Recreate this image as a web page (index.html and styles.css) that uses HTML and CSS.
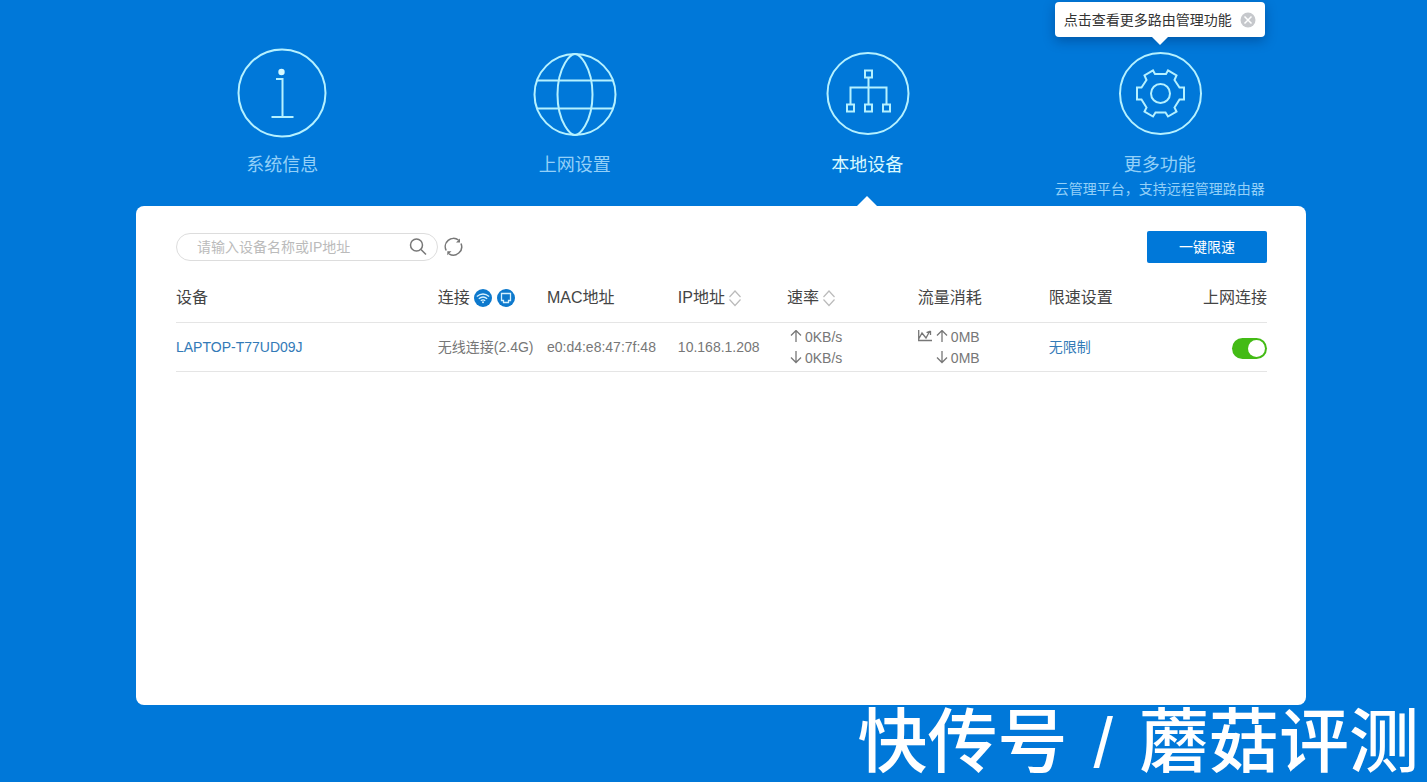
FILE: index.html
```html
<!DOCTYPE html>
<html lang="zh-CN">
<head>
<meta charset="utf-8">
<title>本地设备</title>
<link rel="stylesheet" href="styles.css">
</head>
<body>
<div class="page">
  <nav class="nav">
    <a class="nav-item" href="#">
      <svg class="nav-icon" viewBox="0 0 90 90"><circle cx="45" cy="45" r="43.5"/><circle class="fill" cx="44.500" cy="24" r="3.2"/><path d="M39 31H45.500V69M34.500 69H56.500"/></svg>
      <span class="nav-label">系统信息</span>
    </a>
    <a class="nav-item" href="#">
      <svg class="nav-icon" viewBox="0 0 90 90"><circle cx="45" cy="46.500" r="40.500"/><path d="M45 6C42 6 38 10 35 15C25 32 25 61 35 78C38 83 42 87 45 87C48 87 52 83 55 78C65 61 65 32 55 15C52 10 48 6 45 6M7 32.500H83M7 60.500H83"/></svg>
      <span class="nav-label">上网设置</span>
    </a>
    <a class="nav-item active" href="#">
      <svg class="nav-icon" viewBox="0 0 90 90"><circle cx="46" cy="45.500" r="40.500"/><path d="M43 22.500h7v7h-7zM25 56.500h7v7h-7zM43 56.500h7v7h-7zM61 56.500h7v7h-7zM46.500 29.500V56.500M28.500 56.500V39.500H64.500V56.500"/></svg>
      <span class="nav-label">本地设备</span>
    </a>
    <a class="nav-item" href="#">
      <svg class="nav-icon" viewBox="0 0 90 90"><circle cx="45.500" cy="45.500" r="40.500"/><circle cx="45.500" cy="45.500" r="9.500"/><path d="M40 26H51L53 22.500L61.500 27.500L59.500 32L64.500 39.500H69V51.500H64.500L59.500 59.500L61.500 63.500L53 68.500L50.500 64.500H40.500L38 68.500L29.500 63.500L31.500 59.500L26.500 51.500H22V39.500H26.500L31.500 32L29.500 27.500L38 22.500Z"/></svg>
      <span class="nav-label">更多功能</span>
      <span class="nav-note">云管理平台，支持远程管理路由器</span>
      <span class="tip">点击查看更多路由管理功能
        <svg class="tip-close" viewBox="0 0 16 16"><circle cx="8" cy="8" r="7.500"/><path d="M4.500 4.500l7 7M11.500 4.500l-7 7"/></svg>
      </span>
    </a>
  </nav>

  <main class="panel">
    <div class="toolbar">
      <div class="search">
        <input class="search-input" type="text" placeholder="请输入设备名称或IP地址" aria-label="搜索设备">
        <button class="icon-btn" type="button" aria-label="搜索"><svg width="18" height="18" viewBox="0 0 18 18"><circle cx="7.500" cy="7" r="6"/><path d="M12 11.500l5 5"/></svg></button>
      </div>
      <button class="icon-btn" type="button" aria-label="刷新"><svg width="20" height="20" viewBox="0 0 20 20"><path d="M2.200 13.500A8.300 8.300 0 0 1 14.500 3M17 6.500A8.300 8.300 0 0 1 5 16.800"/><path class="tips" d="M12 5.500L16 1.500V5.500ZM7.500 14.300H3.300V18.300Z"/></svg></button>
      <button class="limit-btn" type="button">一键限速</button>
    </div>

    <table class="devices">
      <colgroup><col class="c-name"><col class="c-link"><col class="c-mac"><col class="c-ip"><col class="c-rate"><col class="c-flow"><col class="c-limit"><col class="c-net"></colgroup>
      <thead>
        <tr>
          <th>设备</th>
          <th><span class="head">连接
            <svg class="badge" viewBox="0 0 18 18"><circle class="disc" cx="9" cy="9" r="9"/><path d="M2.800 7.500Q9 2.500 15.200 7.500M4.800 9.700Q9 6.300 13.200 9.700M6.800 11.800Q9 10 11.200 11.800"/><circle class="dot" cx="9" cy="13.300" r="1"/></svg>
            <svg class="badge second" viewBox="0 0 18 18"><circle class="disc" cx="9" cy="9" r="9"/><path d="M4.500 4.500H13.500V11.500H11.500V13.500H6.500V11.500H4.500Z"/></svg></span></th>
          <th>MAC地址</th>
          <th><span class="head">IP地址<svg class="sort" viewBox="0 0 14 18"><path d="M1.500 8L7 2L12.500 8M1.500 10.500L7 16.500L12.500 10.500"/></svg></span></th>
          <th><span class="head">速率<svg class="sort" viewBox="0 0 14 18"><path d="M1.500 8L7 2L12.500 8M1.500 10.500L7 16.500L12.500 10.500"/></svg></span></th>
          <th>流量消耗</th>
          <th>限速设置</th>
          <th class="right">上网连接</th>
        </tr>
      </thead>
      <tbody>
        <tr>
          <td><a class="link" href="#">LAPTOP-T77UD09J</a></td>
          <td>无线连接(2.4G)</td>
          <td>e0:d4:e8:47:7f:48</td>
          <td>10.168.1.208</td>
          <td>
            <div class="stats">
              <div class="stat indent"><svg class="arrow" viewBox="0 0 12 14"><path d="M6 12V.500M1 5.500L6 .500L11 5.500"/></svg>0KB/s</div>
              <div class="stat indent"><svg class="arrow" viewBox="0 0 12 14"><path d="M6 0V11.500M1 6.500L6 11.500L11 6.500"/></svg>0KB/s</div>
            </div>
          </td>
          <td>
            <div class="stats">
              <div class="stat"><svg class="chart" viewBox="0 0 15 14"><path d="M.700 0V10.500H14M1 8.500L4 3L8 8L11.500 1.500M12.500 1V5M8.500 2.500L12.500 1"/></svg><svg class="arrow" viewBox="0 0 12 14"><path d="M6 12V.500M1 5.500L6 .500L11 5.500"/></svg>0MB</div>
              <div class="stat below"><svg class="arrow" viewBox="0 0 12 14"><path d="M6 0V11.500M1 6.500L6 11.500L11 6.500"/></svg>0MB</div>
            </div>
          </td>
          <td><a class="link" href="#">无限制</a></td>
          <td class="right"><input class="switch" type="checkbox" checked aria-label="上网连接"></td>
        </tr>
      </tbody>
    </table>
  </main>

  <footer class="credit"><span>快传号</span><span>/</span><span>蘑菇评测</span></footer>
</div>
</body>
</html>
```
FILE: styles.css
```css
* { box-sizing: border-box; }

body {
  margin: 0;
  background: #0078d9;
  font: 14px/20px "Liberation Sans", "Noto Sans CJK SC", sans-serif;
  color: #777;
}

a { text-decoration: none; }
button, input { font: inherit; }
svg { fill: none; flex: none; }

.page {
  min-height: 100vh;
  display: flex;
  flex-direction: column;
}

.nav {
  display: grid;
  grid-template-columns: repeat(4, 1fr);
  margin: 0 121px 0 136px;
  padding-top: 48px;
  height: 206px;
}

.nav-item {
  position: relative;
  display: flex;
  flex-direction: column;
  align-items: center;
  color: #93d0f8;
}

.nav-icon {
  width: 90px;
  height: 90px;
  stroke: #b5f1ff;
  stroke-width: 2;
}
.nav-icon .fill { fill: #d5faff; stroke: none; }

.nav-label {
  margin-top: 15px;
  font-size: 18px;
  line-height: 24px;
}

.nav-note {
  margin-top: 2px;
  white-space: nowrap;
}

.active { color: #d9f8ff; }
.active::after {
  content: "";
  position: absolute;
  bottom: 0;
  border: 10px solid transparent;
  border-top: 0;
  border-bottom-color: #fff;
}

.tip {
  position: absolute;
  top: -46px;
  display: flex;
  align-items: center;
  gap: 8px;
  height: 35px;
  padding: 0 9px;
  border-radius: 4px;
  background: #fff;
  box-shadow: 0 4px 12px rgba(0, 30, 80, .35);
  color: #333;
  white-space: nowrap;
}
.tip::after {
  content: "";
  position: absolute;
  top: 100%;
  left: calc(50% - 8px);
  border: 8px solid transparent;
  border-bottom: 0;
  border-top-color: #fff;
}
.tip-close { width: 16px; height: 16px; stroke: #fff; stroke-width: 1.5; }
.tip-close circle { fill: #c6c8cc; stroke: none; }

.panel {
  flex: 1;
  margin: 0 121px 0 136px;
  padding: 24px 39px 24px 40px;
  border-radius: 8px;
  background: #fff;
}

.toolbar {
  display: flex;
  align-items: center;
  gap: 6px;
  height: 34px;
}

.search {
  display: flex;
  align-items: center;
  width: 262px;
  height: 28px;
  padding: 0 10px 0 20px;
  border: 1px solid #ddd;
  border-radius: 14px;
}

.search-input {
  flex: 1;
  min-width: 0;
  padding: 0;
  border: 0;
  outline: 0;
  background: none;
}
.search-input::placeholder { color: #bbb; opacity: 1; }

.icon-btn {
  display: flex;
  padding: 0;
  border: 0;
  background: none;
  stroke: #777;
  stroke-width: 1.5;
}
.tips { fill: #777; stroke: none; }

.limit-btn {
  width: 120px;
  height: 32px;
  margin-left: auto;
  padding: 0;
  border: 0;
  border-radius: 2px;
  background: #0078d9;
  color: #fff;
}

.devices {
  width: 100%;
  margin-top: 8px;
  table-layout: fixed;
  border-collapse: collapse;
}
.c-name { width: 24%; }
.c-link { width: 10%; }
.c-mac { width: 12%; }
.c-ip { width: 10%; }
.c-rate { width: 12%; }
.c-flow { width: 12%; }
.c-limit { width: 10%; }
.c-net { width: 10%; }

.devices th,
.devices td {
  height: 50px;
  padding: 0;
  border-bottom: 1px solid #e5e5e5;
  text-align: left;
  white-space: nowrap;
}
.devices td { height: 49px; }
.devices th {
  padding-top: 2px;
  color: #444;
  font-size: 16px;
  font-weight: 400;
}
.devices .right { text-align: right; }

.head { display: flex; align-items: center; }
.badge { width: 18px; height: 18px; margin-left: 4px; stroke: #d5f1ff; stroke-width: 1.3; }
.badge.second { margin-left: 5px; }
.disc { fill: #0d79cd; stroke: none; }
.dot { fill: #d5f1ff; stroke: none; }
.sort { width: 14px; height: 18px; margin-left: 3px; stroke: #bbb; stroke-width: 1.2; }

.link { color: #337ab7; }

.stats { padding-top: 2px; }
.stat { display: flex; align-items: center; height: 21px; gap: 3px; }
.indent { padding-left: 3px; }
.below { padding-left: 18px; }
.arrow { width: 12px; height: 14px; stroke: #777; stroke-width: 1.3; }
.chart { width: 15px; height: 14px; stroke: #777; stroke-width: 1.3; }

.switch {
  appearance: none;
  display: inline-flex;
  width: 35px;
  height: 21px;
  margin: 3px 0 0;
  padding: 2px;
  border-radius: 11px;
  background: #bbb;
  vertical-align: middle;
}
.switch::before {
  content: "";
  width: 17px;
  height: 17px;
  border-radius: 50%;
  background: #fff;
}
.switch:checked { justify-content: flex-end; background: #43bb15; }

.credit {
  display: flex;
  justify-content: flex-end;
  gap: 26px;
  height: 77px;
  padding-right: 8px;
  color: #fff;
  font-size: 70px;
  font-weight: 500;
  line-height: 77px;
  white-space: nowrap;
}
```
